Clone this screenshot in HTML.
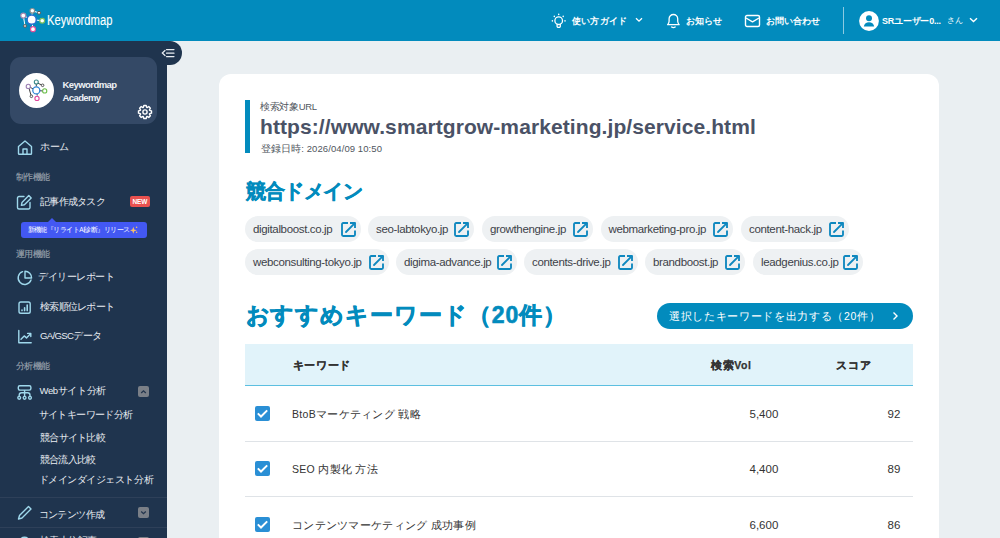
<!DOCTYPE html>
<html lang="ja"><head><meta charset="utf-8">
<style>
*{box-sizing:border-box;margin:0;padding:0}
html,body{width:1000px;height:538px;overflow:hidden}
body{position:relative;background:#eaeff2;font-family:"Liberation Sans",sans-serif;color:#333}
.abs{position:absolute}
#hdr{left:0;top:0;width:1000px;height:41px;background:#028bbd}
#side{left:0;top:41px;width:167px;height:497px;background:#1f344e;overflow:hidden}
#tab{left:160px;top:41px;width:22px;height:24px;background:#1f344e;border-radius:0 12px 12px 0}
#card{left:219px;top:74px;width:720px;height:500px;background:#fff;border-radius:12px}
.t{position:absolute;white-space:nowrap;line-height:1}
.hn{color:#fff;font-weight:bold;font-size:9px;top:16.5px}
.sl{color:#e9edf2;font-size:9.5px;left:40px}
.sh{color:#97a0ab;font-size:8.5px;letter-spacing:-0.5px;left:15.5px;-webkit-text-stroke:0.15px #97a0ab}
.ico{position:absolute}
.chip{position:absolute;height:26px;border-radius:13px;background:#eef1f3}
.chip span{position:absolute;left:8px;top:8.2px;font-size:11.5px;letter-spacing:-0.35px;color:#3d4249;line-height:1;white-space:nowrap}
.chip svg{position:absolute;top:5.8px;right:5px}
.sep{position:absolute;left:245px;width:668px;height:1px;background:#dfe3e7}
.cb{position:absolute;left:255px;width:15px;height:15px}
.kw{position:absolute;left:292px;font-size:10.5px;letter-spacing:0.3px;color:#333;line-height:1;white-space:nowrap}
.num{position:absolute;font-size:11.5px;color:#333;line-height:1;white-space:nowrap}
</style></head><body>
<div id="hdr" class="abs">
  <svg class="abs" style="left:18px;top:6px" width="30" height="28" viewBox="18 6 30 28">
    <g stroke="#fff" stroke-width="1" fill="none">
      <line x1="31.7" y1="19.7" x2="32.3" y2="10.8"/>
      <line x1="32.3" y1="10.8" x2="39" y2="12.8"/>
      <line x1="31.7" y1="19.7" x2="23.3" y2="15.6"/>
      <line x1="23.3" y1="15.6" x2="25" y2="26"/>
      <line x1="31.7" y1="19.7" x2="42.2" y2="20.7"/>
      <line x1="31.7" y1="19.7" x2="33" y2="29.2"/>
    </g>
    <circle cx="31.7" cy="19.7" r="4.6" fill="#fff" stroke="#2a6fd0" stroke-width="1.5"/>
    <circle cx="32.3" cy="10.8" r="2.3" fill="#fff" stroke="#8f8f8f" stroke-width="1.1"/>
    <circle cx="39" cy="12.8" r="1.5" fill="#fff" stroke="#555" stroke-width="1"/>
    <circle cx="23.3" cy="15.6" r="2.5" fill="#fff" stroke="#a58ab0" stroke-width="1.2"/>
    <circle cx="42.2" cy="20.7" r="2.4" fill="#fff" stroke="#7fbf5a" stroke-width="1.2"/>
    <circle cx="25" cy="26" r="1.4" fill="#fff" stroke="#555" stroke-width="1"/>
    <circle cx="33" cy="29.2" r="2.5" fill="#fff" stroke="#e0509a" stroke-width="1.2"/>
  </svg>
  <div class="t" style="left:47px;top:13px;font-size:14px;color:#fff;transform:scaleX(0.8);transform-origin:0 0;-webkit-text-stroke:0.1px #fff">Keywordmap</div>

  <svg class="ico" style="left:550px;top:12px" width="18" height="18" viewBox="0 0 18 18" fill="none" stroke="#fff" stroke-width="1.3" stroke-linecap="round">
    <circle cx="8.7" cy="8.7" r="3.8"/>
    <path d="M7.1 12.2v2a1.2 1.2 0 0 0 1.2 1.2h.8a1.2 1.2 0 0 0 1.2-1.2v-2"/>
    <path d="M8.7 2.3v.3M4.3 4.2v.3M13.2 4.2v.3M2.4 8.7v.3M15 8.7v.3" stroke-width="1.5"/>
  </svg>
  <div class="t hn" style="left:572px;letter-spacing:0.2px">使い方ガイド</div>
  <svg class="ico" style="left:635px;top:17px" width="8" height="6" viewBox="0 0 8 6" fill="none" stroke="#fff" stroke-width="1.3"><path d="M1 1.2l3 3 3-3"/></svg>
  <svg class="ico" style="left:666px;top:13px" width="15" height="16" viewBox="0 0 15 16" fill="none" stroke="#fff" stroke-width="1.3" stroke-linejoin="round">
    <path d="M1.6 11.7Q2.9 10.6 3.1 8.3V5.8A4.3 4.3 0 0 1 11.7 5.8V8.3Q11.9 10.6 13.2 11.7z"/>
    <path d="M5.6 14Q7.4 15.1 9.2 14" stroke-linecap="round"/>
  </svg>
  <div class="t hn" style="left:686px;letter-spacing:0px">お知らせ</div>
  <svg class="ico" style="left:744px;top:14px" width="17" height="14" viewBox="0 0 17 14" fill="none" stroke="#fff" stroke-width="1.4" stroke-linejoin="round">
    <rect x="1.5" y="1.5" width="14" height="11" rx="1.5"/>
    <path d="M2 4l6.5 3.9 6.5-3.9"/>
  </svg>
  <div class="t hn" style="left:765.5px;letter-spacing:0.1px">お問い合わせ</div>
  <div class="abs" style="left:843px;top:7px;width:1px;height:27px;background:rgba(255,255,255,.55)"></div>
  <svg class="ico" style="left:859px;top:10.8px" width="20" height="20" viewBox="0 0 20 20">
    <circle cx="10" cy="10" r="9.9" fill="#fff"/>
    <circle cx="10" cy="7.3" r="3" fill="#028bbd"/>
    <path d="M4.8 15.6c0.4-2.8 2.6-4.3 5.2-4.3s4.8 1.5 5.2 4.3z" fill="#028bbd"/>
  </svg>
  <div class="t hn" style="left:882px;letter-spacing:-0.22px">SRユーザー0...</div>
  <div class="t hn" style="left:947px;top:17px;font-size:8px;font-weight:normal;letter-spacing:0px">さん</div>
  <svg class="ico" style="left:969px;top:17px" width="9" height="6" viewBox="0 0 9 6" fill="none" stroke="#fff" stroke-width="1.4"><path d="M1 1.2l3.5 3.3 3.5-3.3"/></svg>
</div>

<div id="side" class="abs">
  <div class="abs" style="left:10px;top:16px;width:147px;height:67px;background:#344966;border-radius:11px"></div>
  <svg class="abs" style="left:19px;top:32px" width="35" height="35" viewBox="0 0 35 35">
    <circle cx="17.5" cy="17.5" r="17.5" fill="#fff"/>
    <g fill="none" stroke-width="1">
      <path d="M17.3 13.5V11M17.3 9.5l5.5 2.5M9.5 13.5l2.6 9M9.5 13.5l7.8 4M17.3 17.5l7.5 0.5M17.3 17.5l1 5" stroke="#444"/>
    </g>
    <circle cx="17.3" cy="17.4" r="3.5" fill="#fff" stroke="#2f86d6" stroke-width="1.3"/>
    <circle cx="17.3" cy="9" r="2" fill="#fff" stroke="#3b8a8a" stroke-width="1.1"/>
    <circle cx="23.6" cy="12.3" r="1.3" fill="#fff" stroke="#444" stroke-width="0.9"/>
    <circle cx="9.3" cy="13.4" r="2.1" fill="#fff" stroke="#9b7fb3" stroke-width="1.1"/>
    <circle cx="25.7" cy="17.9" r="2.1" fill="#fff" stroke="#6cbf4a" stroke-width="1.1"/>
    <circle cx="12.4" cy="23.3" r="1.3" fill="#fff" stroke="#444" stroke-width="0.9"/>
    <circle cx="18" cy="25.4" r="2.1" fill="#fff" stroke="#e0459a" stroke-width="1.1"/>
  </svg>
  <div class="t" style="left:62.5px;top:39px;font-size:9.5px;font-weight:bold;color:#eef1f5;letter-spacing:-0.56px">Keywordmap</div>
  <div class="t" style="left:62.5px;top:52px;font-size:9.5px;font-weight:bold;color:#eef1f5;letter-spacing:-0.6px">Academy</div>
  <svg class="abs" style="left:136.5px;top:62.8px" width="16" height="16" viewBox="0 0 16 16" fill="none" stroke="#fff" stroke-width="1.4" stroke-linejoin="round"><path d="M6.32 3.40 L6.85 1.50 L9.15 1.50 L9.68 3.40 L10.07 3.56 L11.79 2.59 L13.41 4.21 L12.44 5.93 L12.60 6.32 L14.50 6.85 L14.50 9.15 L12.60 9.68 L12.44 10.07 L13.41 11.79 L11.79 13.41 L10.07 12.44 L9.68 12.60 L9.15 14.50 L6.85 14.50 L6.32 12.60 L5.93 12.44 L4.21 13.41 L2.59 11.79 L3.56 10.07 L3.40 9.68 L1.50 9.15 L1.50 6.85 L3.40 6.32 L3.56 5.93 L2.59 4.21 L4.21 2.59 L5.93 3.56Z"/><circle cx="8" cy="8" r="2.1"/></svg>

  <!-- home -->
  <svg class="abs" style="left:17px;top:99px" width="16" height="15" viewBox="0 0 16 15" fill="none" stroke="#9fd8ec" stroke-width="1.4" stroke-linejoin="round">
    <path d="M1.5 6.5L8 1l6.5 5.5V13.5a0.8 0.8 0 0 1-.8.8H2.3a0.8 0.8 0 0 1-.8-.8z"/>
    <path d="M6 14.2V9h4v5.2"/>
  </svg>
  <div class="t sl" style="left:40px;top:101px;letter-spacing:-0.5px">ホーム</div>
  <div class="t sh" style="top:132px">制作機能</div>
  <!-- edit -->
  <svg class="abs" style="left:16.3px;top:152.8px" width="17" height="17" viewBox="0 0 17 17" fill="none" stroke="#9fd8ec" stroke-width="1.4" stroke-linecap="round" stroke-linejoin="round">
    <path d="M8 2.5H3a1.5 1.5 0 0 0-1.5 1.5v9.5A1.5 1.5 0 0 0 3 15h9.5a1.5 1.5 0 0 0 1.5-1.5V8.5"/>
    <path d="M12.8 1.6l2.4 2.4-6.8 6.8-3 .6.6-3z"/>
  </svg>
  <div class="t sl" style="left:40px;top:156px;letter-spacing:-0.72px">記事作成タスク</div>
  <div class="abs" style="left:130px;top:155px;width:20px;height:11px;background:#e9514f;border-radius:2px"></div>
  <div class="t" style="left:132.5px;top:157.5px;font-size:6.5px;font-weight:bold;color:#fff;letter-spacing:-0.1px">NEW</div>
  <!-- tooltip -->
  <div class="abs" style="left:21px;top:181px;width:125.5px;height:16px;background:#4358f3;border-radius:3px"></div>
  <div class="abs" style="left:48px;top:176.5px;width:0;height:0;border-left:4px solid transparent;border-right:4px solid transparent;border-bottom:4.5px solid #4358f3"></div>
  <div class="t" style="left:27.5px;top:185.5px;font-size:6.5px;color:#fff;letter-spacing:-0.52px">新機能『リライトAI診断』リリース</div>
  <svg class="abs" style="left:130px;top:185px" width="9" height="9" viewBox="0 0 9 9"><path d="M3.3 0.8l.9 2.6 2.6.9-2.6.9-.9 2.6-.9-2.6-2.6-.9 2.6-.9z" fill="#f7c06a"/><circle cx="6.6" cy="1.2" r=".8" fill="#f7c06a"/><circle cx="6.6" cy="6.2" r=".8" fill="#f7c06a"/></svg>

  <div class="t sh" style="top:209px">運用機能</div>
  <!-- pie -->
  <svg class="abs" style="left:16px;top:229px" width="17" height="16" viewBox="0 0 17 16" fill="none" stroke="#9fd8ec" stroke-width="1.4" stroke-linejoin="round">
    <path d="M6.6 1.6A6.6 6.6 0 1 0 15 10" stroke-linecap="round"/>
    <path d="M9 1.2V8h6.6A6.6 6.6 0 0 0 9 1.2z"/>
  </svg>
  <div class="t sl" style="left:38px;top:231px;letter-spacing:-0.43px">デイリーレポート</div>
  <!-- rank -->
  <svg class="abs" style="left:17px;top:259px" width="15" height="15" viewBox="0 0 15 15" fill="none" stroke="#9fd8ec" stroke-width="1.4">
    <rect x="2" y="2" width="11.2" height="11.2" rx="1.8"/>
    <path d="M5 10.6v-.6M7.6 10.6V7.8M10.2 10.6V5" stroke-linecap="round" stroke-width="1.6"/>
  </svg>
  <div class="t sl" style="left:40px;top:261px;letter-spacing:-0.71px">検索順位レポート</div>
  <!-- chart -->
  <svg class="abs" style="left:17px;top:288px" width="16" height="15" viewBox="0 0 16 15" fill="none" stroke="#9fd8ec" stroke-width="1.4" stroke-linejoin="round" stroke-linecap="round">
    <path d="M1.8 1.5v12.3h12.4"/>
    <path d="M4 10.2l3.2-3.3 2.3 2 4-4.2M10.6 4.4h3.2v3.2"/>
  </svg>
  <div class="t sl" style="left:40px;top:289.5px;letter-spacing:-0.62px">GA/GSCデータ</div>

  <div class="t sh" style="top:321px">分析機能</div>
  <!-- sitemap -->
  <svg class="abs" style="left:16px;top:343px" width="17" height="16" viewBox="0 0 17 16" fill="none" stroke="#9fd8ec" stroke-width="1.4">
    <rect x="2.3" y="1.8" width="12.6" height="4.3" rx="1.5"/>
    <path d="M8.6 6.1v6.4M3.2 12.5v-1.3a2.4 2.4 0 0 1 2.4-2.4h6a2.4 2.4 0 0 1 2.4 2.4v1.3"/>
    <circle cx="3.2" cy="13.8" r="1.4"/><circle cx="8.6" cy="13.8" r="1.4"/><circle cx="14" cy="13.8" r="1.4"/>
  </svg>
  <div class="t sl" style="left:39.5px;top:345px;letter-spacing:-0.36px">Webサイト分析</div>
  <div class="abs" style="left:138px;top:345px;width:11px;height:11px;background:#7a7f87;border-radius:2px"></div>
  <svg class="abs" style="left:138px;top:345px" width="11" height="11" viewBox="0 0 11 11" fill="none" stroke="#23354d" stroke-width="1.3"><path d="M3.2 7l2.3-2.2 2.3 2.2"/></svg>
  <div class="t sl" style="left:38.5px;top:369px;letter-spacing:-0.58px">サイトキーワード分析</div>
  <div class="t sl" style="left:40px;top:391.5px;letter-spacing:-0.73px">競合サイト比較</div>
  <div class="t sl" style="left:40px;top:413.5px;letter-spacing:-0.8px">競合流入比較</div>
  <div class="t sl" style="left:38.5px;top:434px;letter-spacing:-0.45px">ドメインダイジェスト分析</div>
  <div class="abs" style="left:0;top:456px;width:167px;height:1px;background:#2e4059"></div>
  <!-- pen -->
  <svg class="abs" style="left:17px;top:464.3px" width="16" height="15" viewBox="0 0 16 15" fill="none" stroke="#9fd8ec" stroke-width="1.4" stroke-linejoin="round">
    <path d="M11.5 1.5l2.5 2.5-9 9-3.5 1 1-3.5z"/>
  </svg>
  <div class="t sl" style="left:38.5px;top:468.5px;letter-spacing:-0.57px">コンテンツ作成</div>
  <div class="abs" style="left:138px;top:466px;width:11px;height:11px;background:#7a7f87;border-radius:2px"></div>
  <svg class="abs" style="left:138px;top:466px" width="11" height="11" viewBox="0 0 11 11" fill="none" stroke="#23354d" stroke-width="1.3"><path d="M3.2 4.5l2.3 2.2 2.3-2.2"/></svg>
  <div class="abs" style="left:0;top:486px;width:167px;height:1px;background:#2e4059"></div>
  <svg class="abs" style="left:17px;top:494.5px" width="16" height="15" viewBox="0 0 16 15" fill="none" stroke="#9fd8ec" stroke-width="1.4"><circle cx="7.5" cy="6.5" r="5.2"/></svg>
  <div class="t sl" style="left:40px;top:495px;letter-spacing:-0.6px">検索上位記事</div>
  <div class="abs" style="left:138px;top:495.5px;width:11px;height:11px;background:#7a7f87;border-radius:2px"></div>
</div>
<div id="tab" class="abs"></div>
<svg class="abs" style="left:160px;top:48px" width="16" height="10" viewBox="0 0 16 10" fill="none" stroke="#e9edf2" stroke-width="1.2" stroke-linecap="round">
  <path d="M5 2.5L2.3 5 5 7.5"/>
  <path d="M6.5 1.6h7.5M6.5 5.2h7.5M6.5 8.6h7.5"/>
</svg>

<div id="card" class="abs"></div>
<div class="abs" style="left:245px;top:100px;width:5px;height:53px;background:#028bbd"></div>
<div class="t" style="left:260px;top:101.5px;font-size:9.5px;letter-spacing:-0.33px;color:#50565e">検索対象URL</div>
<div class="t" style="left:260px;top:115.5px;font-size:21px;font-weight:bold;letter-spacing:0.09px;color:#4a5266">https://www.smartgrow-marketing.jp/service.html</div>
<div class="t" style="left:261px;top:143.5px;font-size:9.5px;letter-spacing:0.08px;color:#50565e">登録日時: 2026/04/09 10:50</div>

<div class="t" style="left:245.5px;top:182px;font-size:19.5px;font-weight:bold;letter-spacing:-0.6px;color:#028bbd;-webkit-text-stroke:0.5px #028bbd">競合ドメイン</div>

<div class="chip" style="left:245px;top:216px;width:116px"><span>digitalboost.co.jp</span><svg width="15" height="15" viewBox="0 0 15 15" fill="none" stroke="#0f88bf" stroke-width="1.85" stroke-linecap="butt" stroke-linejoin="round"><path d="M7 1H2.2A1.2 1.2 0 0 0 1 2.2v10.6A1.2 1.2 0 0 0 2.2 14h10.6a1.2 1.2 0 0 0 1.2-1.2V8.5"/><path d="M9 1h5v5"/><path d="M13.6 1.4L5 10" stroke-linecap="round"/></svg></div>
<div class="chip" style="left:368px;top:216px;width:106px"><span>seo-labtokyo.jp</span><svg width="15" height="15" viewBox="0 0 15 15" fill="none" stroke="#0f88bf" stroke-width="1.85" stroke-linecap="butt" stroke-linejoin="round"><path d="M7 1H2.2A1.2 1.2 0 0 0 1 2.2v10.6A1.2 1.2 0 0 0 2.2 14h10.6a1.2 1.2 0 0 0 1.2-1.2V8.5"/><path d="M9 1h5v5"/><path d="M13.6 1.4L5 10" stroke-linecap="round"/></svg></div>
<div class="chip" style="left:482px;top:216px;width:111px"><span>growthengine.jp</span><svg width="15" height="15" viewBox="0 0 15 15" fill="none" stroke="#0f88bf" stroke-width="1.85" stroke-linecap="butt" stroke-linejoin="round"><path d="M7 1H2.2A1.2 1.2 0 0 0 1 2.2v10.6A1.2 1.2 0 0 0 2.2 14h10.6a1.2 1.2 0 0 0 1.2-1.2V8.5"/><path d="M9 1h5v5"/><path d="M13.6 1.4L5 10" stroke-linecap="round"/></svg></div>
<div class="chip" style="left:600.5px;top:216px;width:132.5px"><span>webmarketing-pro.jp</span><svg width="15" height="15" viewBox="0 0 15 15" fill="none" stroke="#0f88bf" stroke-width="1.85" stroke-linecap="butt" stroke-linejoin="round"><path d="M7 1H2.2A1.2 1.2 0 0 0 1 2.2v10.6A1.2 1.2 0 0 0 2.2 14h10.6a1.2 1.2 0 0 0 1.2-1.2V8.5"/><path d="M9 1h5v5"/><path d="M13.6 1.4L5 10" stroke-linecap="round"/></svg></div>
<div class="chip" style="left:741px;top:216px;width:108px"><span>content-hack.jp</span><svg width="15" height="15" viewBox="0 0 15 15" fill="none" stroke="#0f88bf" stroke-width="1.85" stroke-linecap="butt" stroke-linejoin="round"><path d="M7 1H2.2A1.2 1.2 0 0 0 1 2.2v10.6A1.2 1.2 0 0 0 2.2 14h10.6a1.2 1.2 0 0 0 1.2-1.2V8.5"/><path d="M9 1h5v5"/><path d="M13.6 1.4L5 10" stroke-linecap="round"/></svg></div>
<div class="chip" style="left:245px;top:249px;width:144px"><span>webconsulting-tokyo.jp</span><svg width="15" height="15" viewBox="0 0 15 15" fill="none" stroke="#0f88bf" stroke-width="1.85" stroke-linecap="butt" stroke-linejoin="round"><path d="M7 1H2.2A1.2 1.2 0 0 0 1 2.2v10.6A1.2 1.2 0 0 0 2.2 14h10.6a1.2 1.2 0 0 0 1.2-1.2V8.5"/><path d="M9 1h5v5"/><path d="M13.6 1.4L5 10" stroke-linecap="round"/></svg></div>
<div class="chip" style="left:396px;top:249px;width:121px"><span>digima-advance.jp</span><svg width="15" height="15" viewBox="0 0 15 15" fill="none" stroke="#0f88bf" stroke-width="1.85" stroke-linecap="butt" stroke-linejoin="round"><path d="M7 1H2.2A1.2 1.2 0 0 0 1 2.2v10.6A1.2 1.2 0 0 0 2.2 14h10.6a1.2 1.2 0 0 0 1.2-1.2V8.5"/><path d="M9 1h5v5"/><path d="M13.6 1.4L5 10" stroke-linecap="round"/></svg></div>
<div class="chip" style="left:524px;top:249px;width:113.5px"><span>contents-drive.jp</span><svg width="15" height="15" viewBox="0 0 15 15" fill="none" stroke="#0f88bf" stroke-width="1.85" stroke-linecap="butt" stroke-linejoin="round"><path d="M7 1H2.2A1.2 1.2 0 0 0 1 2.2v10.6A1.2 1.2 0 0 0 2.2 14h10.6a1.2 1.2 0 0 0 1.2-1.2V8.5"/><path d="M9 1h5v5"/><path d="M13.6 1.4L5 10" stroke-linecap="round"/></svg></div>
<div class="chip" style="left:645px;top:249px;width:100px"><span>brandboost.jp</span><svg width="15" height="15" viewBox="0 0 15 15" fill="none" stroke="#0f88bf" stroke-width="1.85" stroke-linecap="butt" stroke-linejoin="round"><path d="M7 1H2.2A1.2 1.2 0 0 0 1 2.2v10.6A1.2 1.2 0 0 0 2.2 14h10.6a1.2 1.2 0 0 0 1.2-1.2V8.5"/><path d="M9 1h5v5"/><path d="M13.6 1.4L5 10" stroke-linecap="round"/></svg></div>
<div class="chip" style="left:753px;top:249px;width:110px"><span>leadgenius.co.jp</span><svg width="15" height="15" viewBox="0 0 15 15" fill="none" stroke="#0f88bf" stroke-width="1.85" stroke-linecap="butt" stroke-linejoin="round"><path d="M7 1H2.2A1.2 1.2 0 0 0 1 2.2v10.6A1.2 1.2 0 0 0 2.2 14h10.6a1.2 1.2 0 0 0 1.2-1.2V8.5"/><path d="M9 1h5v5"/><path d="M13.6 1.4L5 10" stroke-linecap="round"/></svg></div>

<div class="t" style="left:245.5px;top:304px;font-size:23px;font-weight:bold;letter-spacing:0.92px;color:#028bbd;-webkit-text-stroke:0.6px #028bbd">おすすめキーワード（20件）</div>
<div class="abs" style="left:657px;top:303px;width:256px;height:26px;background:#028bbd;border-radius:13px"></div>
<div class="t" style="left:669px;top:310.5px;font-size:10.5px;letter-spacing:0.67px;color:#fff">選択したキーワードを出力する（20件）</div>
<svg class="abs" style="left:891px;top:311px" width="8" height="10" viewBox="0 0 8 10" fill="none" stroke="#fff" stroke-width="1.4"><path d="M2.5 1.5L6 5 2.5 8.5"/></svg>

<div class="abs" style="left:245px;top:344px;width:668px;height:42px;background:#e1f3fa;border-bottom:1.5px solid #5cbfe0"></div>
<div class="t" style="left:292.5px;top:359.5px;font-size:10.5px;font-weight:bold;letter-spacing:0.68px;color:#333;-webkit-text-stroke:0.25px #333">キーワード</div>
<div class="t" style="left:711px;top:359.5px;font-size:10.5px;font-weight:bold;letter-spacing:0.6px;color:#333;-webkit-text-stroke:0.25px #333">検索Vol</div>
<div class="t" style="left:835.5px;top:360px;font-size:10.5px;font-weight:bold;letter-spacing:1px;color:#333;-webkit-text-stroke:0.25px #333">スコア</div>

<svg class="cb" style="top:406px" viewBox="0 0 15 15"><rect width="15" height="15" rx="2" fill="#2a8fd5"/><path d="M2.8 7.4l3.2 3.1 6.2-6.1" fill="none" stroke="#fff" stroke-width="2"/></svg>
<div class="kw" style="top:408.5px">BtoBマーケティング 戦略</div>
<div class="num" style="left:749.5px;top:409px">5,400</div>
<div class="num" style="left:887.5px;top:409px">92</div>
<div class="sep" style="top:441px"></div>

<svg class="cb" style="top:461px" viewBox="0 0 15 15"><rect width="15" height="15" rx="2" fill="#2a8fd5"/><path d="M2.8 7.4l3.2 3.1 6.2-6.1" fill="none" stroke="#fff" stroke-width="2"/></svg>
<div class="kw" style="top:463.5px">SEO 内製化 方法</div>
<div class="num" style="left:749.5px;top:464px">4,400</div>
<div class="num" style="left:887.5px;top:464px">89</div>
<div class="sep" style="top:496px"></div>

<svg class="cb" style="top:517px" viewBox="0 0 15 15"><rect width="15" height="15" rx="2" fill="#2a8fd5"/><path d="M2.8 7.4l3.2 3.1 6.2-6.1" fill="none" stroke="#fff" stroke-width="2"/></svg>
<div class="kw" style="top:519.5px">コンテンツマーケティング 成功事例</div>
<div class="num" style="left:749.5px;top:520px">6,600</div>
<div class="num" style="left:887.5px;top:520px">86</div>
</body></html>
